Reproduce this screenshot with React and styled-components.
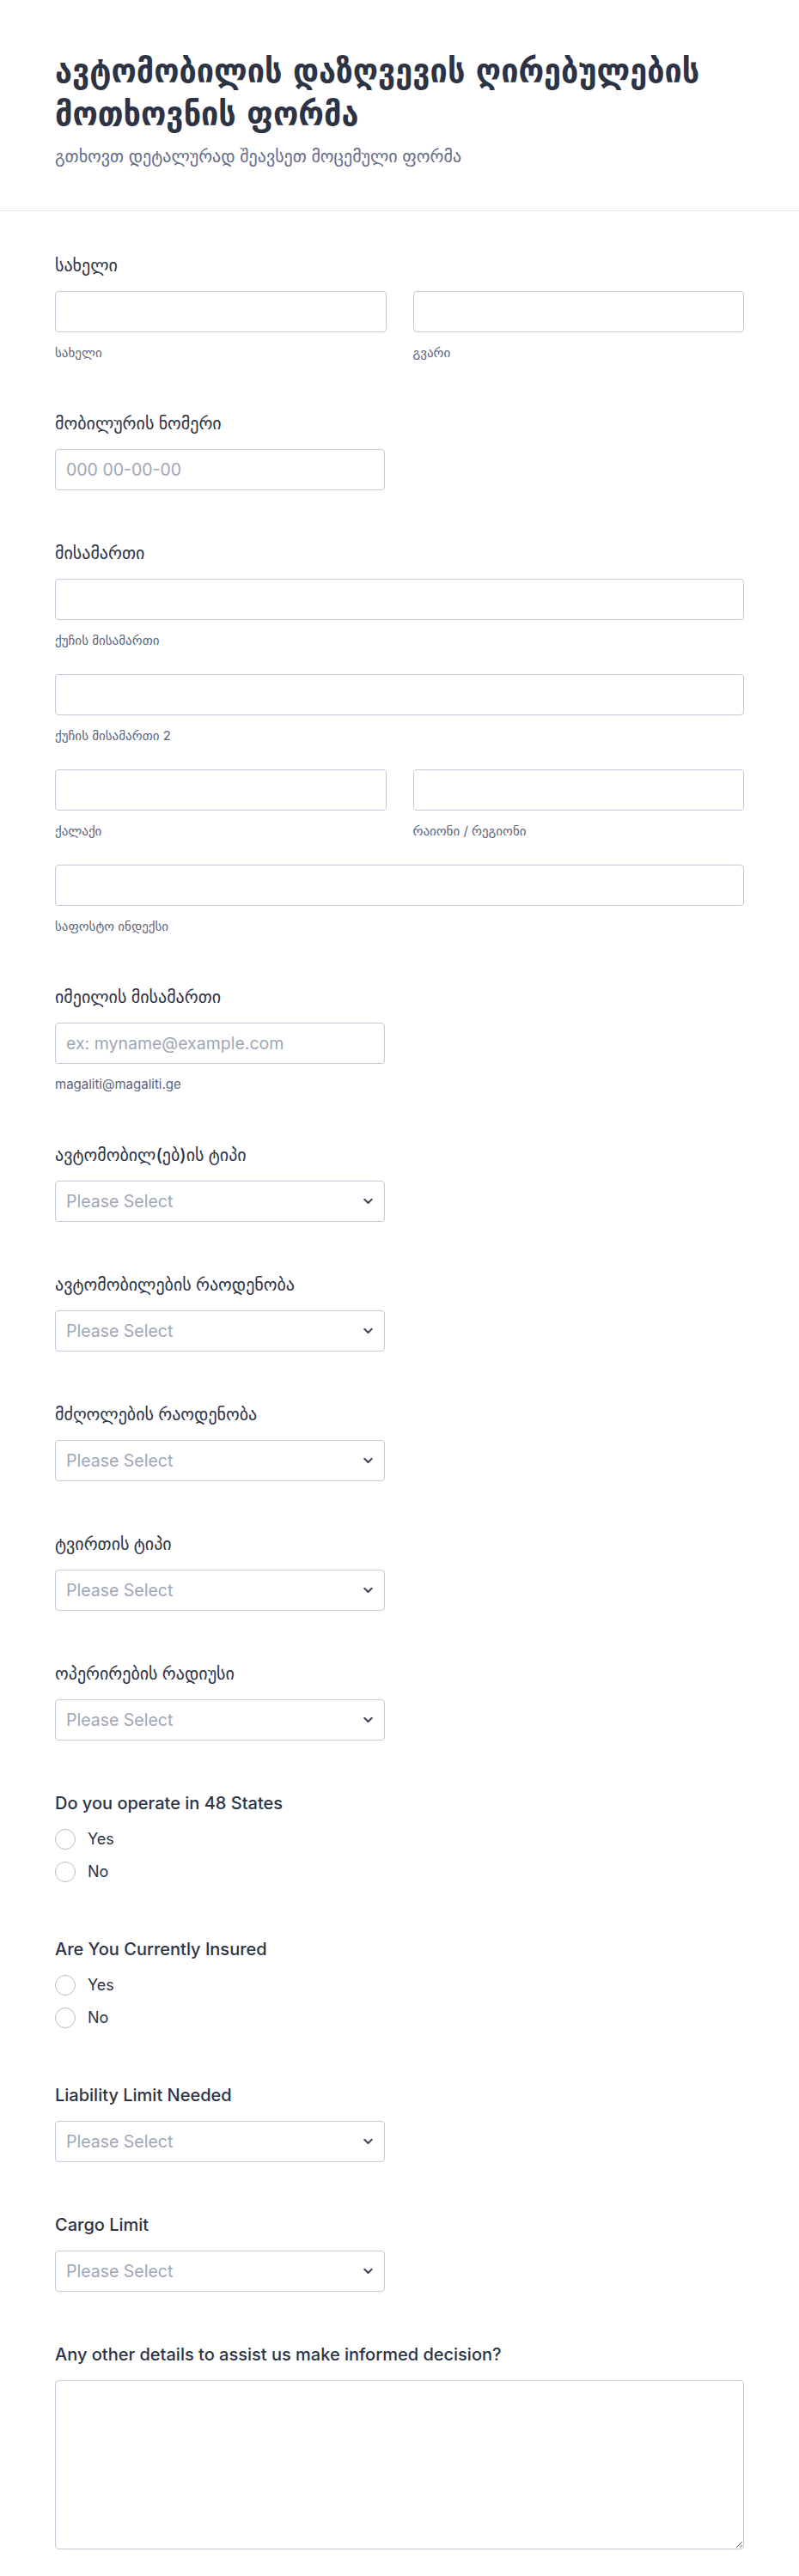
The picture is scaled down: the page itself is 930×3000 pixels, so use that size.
import React from "react";
import styled, { createGlobalStyle } from "styled-components";

const GlobalStyle = createGlobalStyle`
  * { box-sizing: border-box; }
  body {
    margin: 0;
    background: #ffffff;
    font-family: Inter, "DejaVu Sans", sans-serif;
    color: #2c3345;
  }
`;

const Page = styled.div`
  width: 100%;
  background: #ffffff;
`;

const Header = styled.header`
  padding: 57px 64px 51px;
  border-bottom: 1px solid #e3e5ee;
`;

const Title = styled.h1`
  margin: 0;
  font-family: "DejaVu Sans Condensed", Inter, "DejaVu Sans", sans-serif;
  font-stretch: condensed;
  font-size: 40px;
  line-height: 50px;
  font-weight: 700;
  color: #2c3345;
`;

const Subtitle = styled.p`
  margin: 13px 0 0;
  font-size: 20px;
  line-height: 24px;
  color: #656c8a;
`;

const Form = styled.form`
  display: flex;
  flex-direction: column;
  gap: 61px;
  padding: 51px 64px 60px;
`;

const Field = styled.div`
  display: flex;
  flex-direction: column;
  padding-bottom: ${(p) => (p.$extra ? `${p.$extra}px` : "0")};
`;

const Label = styled.label`
  font-size: 20px;
  line-height: 24px;
  font-weight: 500;
  color: #2c3345;
  margin-bottom: 18px;
`;

const Stack = styled.div`
  display: flex;
  flex-direction: column;
  gap: 30px;
`;

const TwoCol = styled.div`
  display: grid;
  grid-template-columns: 1fr 1fr;
  gap: 31px;
`;

const Control = styled.div`
  display: flex;
  flex-direction: column;
  width: ${(p) => (p.$half ? "384px" : "100%")};
`;

const TextInput = styled.input`
  width: 100%;
  height: 48px;
  padding: 0 12px;
  border: 1px solid #c3cad8;
  border-radius: 4px;
  background: #ffffff;
  font-family: inherit;
  font-size: 19.5px;
  color: #2c3345;
  outline: none;
  &::placeholder {
    color: #a0a6b8;
  }
`;

const SubLabel = styled.span`
  margin-top: 15px;
  font-size: 15px;
  line-height: 18px;
  color: #57647e;
`;

const SelectWrap = styled.div`
  position: relative;
  width: 384px;
  height: 48px;
`;

const Select = styled.select`
  appearance: none;
  -webkit-appearance: none;
  width: 100%;
  height: 100%;
  padding: 0 40px 0 12px;
  border: 1px solid #c3cad8;
  border-radius: 4px;
  background: #ffffff;
  font-family: inherit;
  font-size: 19.5px;
  color: #a0a6b8;
  outline: none;
`;

const Chevron = styled.svg`
  position: absolute;
  right: 14px;
  top: 50%;
  transform: translateY(-50%);
  pointer-events: none;
`;

const RadioList = styled.div`
  display: flex;
  flex-direction: column;
  gap: 14px;
`;

const RadioItem = styled.label`
  display: flex;
  align-items: center;
  gap: 14px;
  font-size: 18px;
  line-height: 24px;
  color: #2c3345;
`;

const Circle = styled.span`
  width: 24px;
  height: 24px;
  border: 1px solid #b8bdc9;
  border-radius: 50%;
  background: #ffffff;
  flex: none;
`;

const TextArea = styled.textarea`
  width: 100%;
  height: 197px;
  padding: 12px;
  border: 1px solid #c3cad8;
  border-radius: 4px;
  font-family: inherit;
  font-size: 18px;
  outline: none;
`;

function SelectField({ label }) {
  return (
    <Field>
      <Label>{label}</Label>
      <SelectWrap>
        <Select defaultValue="">
          <option value="">Please Select</option>
        </Select>
        <Chevron width="11" height="7" viewBox="0 0 11 7" fill="none">
          <path d="M1.3 1.3L5.5 5.5L9.7 1.3" stroke="#3d4456" strokeWidth="2" strokeLinecap="round" strokeLinejoin="round" />
        </Chevron>
      </SelectWrap>
    </Field>
  );
}

function RadioField({ label }) {
  return (
    <Field $extra={5}>
      <Label>{label}</Label>
      <RadioList>
        <RadioItem>
          <Circle />
          Yes
        </RadioItem>
        <RadioItem>
          <Circle />
          No
        </RadioItem>
      </RadioList>
    </Field>
  );
}

function InputWithSub({ sub, placeholder }) {
  return (
    <Control>
      <TextInput placeholder={placeholder} />
      <SubLabel>{sub}</SubLabel>
    </Control>
  );
}

export default function App() {
  return (
    <Page>
      <GlobalStyle />
      <Header>
        <Title>ავტომობილის დაზღვევის ღირებულების მოთხოვნის ფორმა</Title>
        <Subtitle>გთხოვთ დეტალურად შეავსეთ მოცემული ფორმა</Subtitle>
      </Header>
      <Form onSubmit={(e) => e.preventDefault()}>
        <Field>
          <Label>სახელი</Label>
          <TwoCol>
            <InputWithSub sub="სახელი" />
            <InputWithSub sub="გვარი" />
          </TwoCol>
        </Field>

        <Field>
          <Label>მობილურის ნომერი</Label>
          <Control $half>
            <TextInput placeholder="000 00-00-00" />
          </Control>
        </Field>

        <Field>
          <Label>მისამართი</Label>
          <Stack>
            <InputWithSub sub="ქუჩის მისამართი" />
            <InputWithSub sub="ქუჩის მისამართი 2" />
            <TwoCol>
              <InputWithSub sub="ქალაქი" />
              <InputWithSub sub="რაიონი / რეგიონი" />
            </TwoCol>
            <InputWithSub sub="საფოსტო ინდექსი" />
          </Stack>
        </Field>

        <Field>
          <Label>იმეილის მისამართი</Label>
          <Control $half>
            <TextInput placeholder="ex: myname@example.com" />
            <SubLabel>magaliti@magaliti.ge</SubLabel>
          </Control>
        </Field>

        <SelectField label="ავტომობილ(ებ)ის ტიპი" />
        <SelectField label="ავტომობილების რაოდენობა" />
        <SelectField label="მძღოლების რაოდენობა" />
        <SelectField label="ტვირთის ტიპი" />
        <SelectField label="ოპერირების რადიუსი" />

        <RadioField label="Do you operate in 48 States" />
        <RadioField label="Are You Currently Insured" />

        <SelectField label="Liability Limit Needed" />
        <SelectField label="Cargo Limit" />

        <Field>
          <Label>Any other details to assist us make informed decision?</Label>
          <TextArea />
        </Field>
      </Form>
    </Page>
  );
}
